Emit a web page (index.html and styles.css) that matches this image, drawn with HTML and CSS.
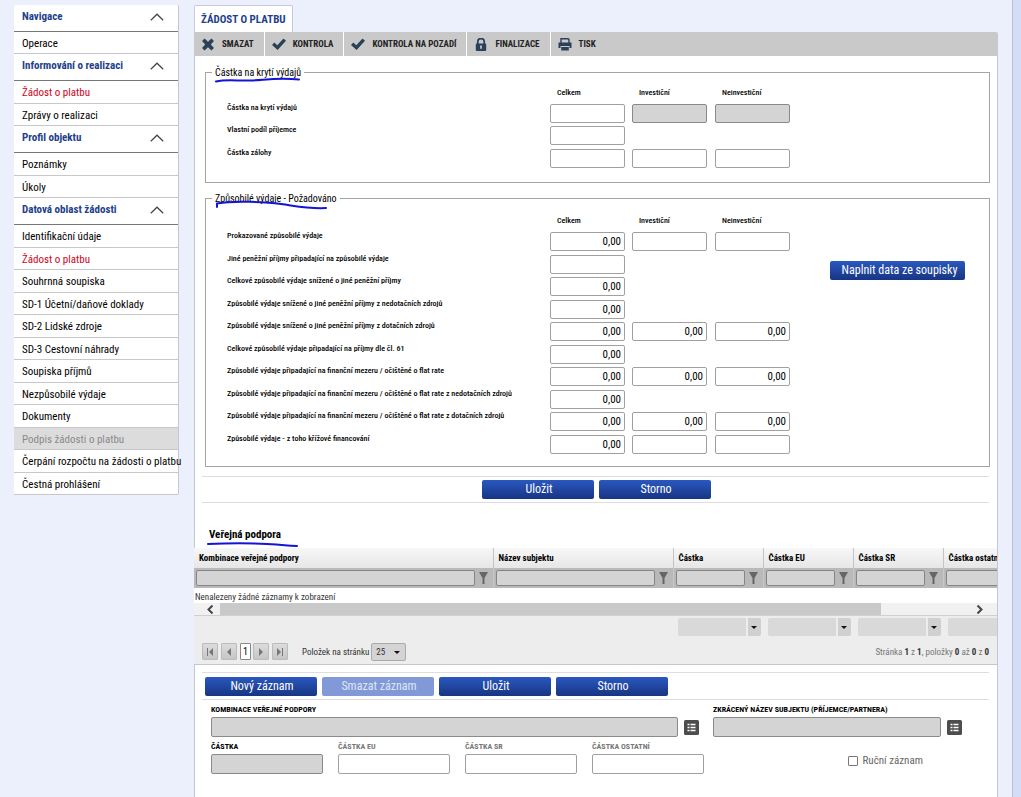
FILE: index.html
```html
<!DOCTYPE html>
<html lang="cs">
<head>
<meta charset="utf-8">
<meta name="viewport" content="width=device-width, initial-scale=1">
<title>Žádost o platbu</title>
<link rel="stylesheet" href="styles.css">
</head>
<body>
<svg class="sprite" aria-hidden="true">
  <symbol id="chevron" viewBox="0 0 14 8"><path d="M.8 7.2 7 1.2l6.200 6" fill="none" stroke="#444" stroke-width="1.200"/></symbol>
  <symbol id="check" viewBox="0 0 14 12"><path d="M0 6.500 2.300 4l3 2.700L11.500 0 14 2.300 5.600 11.500z" fill="#2b4158"/></symbol>
  <symbol id="funnel" viewBox="0 0 9 12"><path d="M0 0h9L5.500 6V12h-2V6z" fill="#666"/></symbol>
  <symbol id="list" viewBox="0 0 15 15"><rect width="15" height="15" rx="1.500" fill="#4d4d4d"/><path d="M3.500 4.500h2M3.500 7.500h2M3.500 10.500h2M6.500 4.500h5M6.500 7.500h5M6.500 10.500h5" stroke="#fff" stroke-width="1.500"/></symbol>
</svg>
<div class="page">
  <nav class="sidebar" aria-label="Navigace">
    <button class="group">Navigace<svg><use href="#chevron"/></svg></button>
    <ul class="single"><li><a href="#">Operace</a></li></ul>
    <button class="group">Informování o realizaci<svg><use href="#chevron"/></svg></button>
    <ul><li><a class="current" href="#">Žádost o platbu</a></li><li><a href="#">Zprávy o realizaci</a></li></ul>
    <button class="group">Profil objektu<svg><use href="#chevron"/></svg></button>
    <ul><li><a href="#">Poznámky</a></li><li><a href="#">Úkoly</a></li></ul>
    <button class="group">Datová oblast žádosti<svg><use href="#chevron"/></svg></button>
    <ul>
      <li><a href="#">Identifikační údaje</a></li>
      <li><a class="current" href="#">Žádost o platbu</a></li>
      <li><a href="#">Souhrnná soupiska</a></li>
      <li><a href="#">SD-1 Účetní/daňové doklady</a></li>
      <li><a href="#">SD-2 Lidské zdroje</a></li>
      <li><a href="#">SD-3 Cestovní náhrady</a></li>
      <li><a href="#">Soupiska příjmů</a></li>
      <li><a href="#">Nezpůsobilé výdaje</a></li>
      <li><a href="#">Dokumenty</a></li>
      <li><a class="disabled" href="#">Podpis žádosti o platbu</a></li>
      <li><a href="#">Čerpání rozpočtu na žádosti o platbu</a></li>
      <li><a href="#">Čestná prohlášení</a></li>
    </ul>
  </nav>

  <main class="main">
    <h1 class="tab">ŽÁDOST O PLATBU</h1>
    <div class="toolbar">
      <button><svg viewBox="0 0 12 12"><path d="M2.800.500 6 3.500 9.200.500 11.500 2.800 8.600 6l2.900 3.200-2.300 2.300L6 8.500l-3.200 3L.5 9.200 3.400 6 .5 2.800z" fill="#2b4158"/></svg>SMAZAT</button>
      <button><svg viewBox="0 0 14 12"><use href="#check"/></svg>KONTROLA</button>
      <button><svg viewBox="0 0 14 12"><use href="#check"/></svg>KONTROLA NA POZADÍ</button>
      <button><svg viewBox="0 0 12 12"><path d="M3 6V3.500a3 3 0 0 1 6 0V6" fill="none" stroke="#2b4158" stroke-width="1.600"/><rect x="1.200" y="5" width="9.600" height="7" rx="1" fill="#2b4158"/><path d="M6 7v3" stroke="#c9c9c9" stroke-width="1.600"/></svg>FINALIZACE</button>
      <button><svg viewBox="0 0 14 13"><path d="M3 5V.7h7.200L11 1.500V5" fill="#c9c9c9" stroke="#2b4158" stroke-width="1.400"/><path d="M.5 4.500h13V10h-2V8h-9v2h-2z" fill="#2b4158"/><rect x="3.200" y="9" width="7.600" height="3.500" fill="#2b4158"/></svg>TISK</button>
    </div>

    <div class="panel">
      <fieldset class="box cover">
        <legend>Částka na krytí výdajů<svg class="stroke" viewBox="0 0 86 6"><path d="M1 4.500C12 2 22 4 36 3.500S62 .5 84 2.500"/></svg></legend>
        <div class="amounts">
          <div class="row head"><span></span><span>Celkem</span><span>Investiční</span><span>Neinvestiční</span></div>
          <div class="row"><label for="a1">Částka na krytí výdajů</label><input id="a1"><input aria-label="Investiční" disabled><input aria-label="Neinvestiční" disabled></div>
          <div class="row"><label for="a2">Vlastní podíl příjemce</label><input id="a2"></div>
          <div class="row"><label for="a3">Částka zálohy</label><input id="a3"><input aria-label="Investiční"><input aria-label="Neinvestiční"></div>
        </div>
      </fieldset>

      <fieldset class="box eligible">
        <legend>Způsobilé výdaje - Požadováno<svg class="stroke long" viewBox="0 0 114 9"><path d="M2 6V2.500C18-.5 50 .8 66 3s28 5 45 4"/></svg></legend>
        <div class="amounts">
          <div class="row head"><span></span><span>Celkem</span><span>Investiční</span><span>Neinvestiční</span></div>
          <div class="row"><label for="b1">Prokazované způsobilé výdaje</label><input id="b1" value="0,00"><input aria-label="Investiční"><input aria-label="Neinvestiční"></div>
          <div class="row"><label for="b2">Jiné peněžní příjmy připadající na způsobilé výdaje</label><input id="b2"></div>
          <div class="row"><label for="b3">Celkové způsobilé výdaje snížené o jiné peněžní příjmy</label><input id="b3" value="0,00"></div>
          <div class="row"><label for="b4">Způsobilé výdaje snížené o jiné peněžní příjmy z nedotačních zdrojů</label><input id="b4" value="0,00"></div>
          <div class="row"><label for="b5">Způsobilé výdaje snížené o jiné peněžní příjmy z dotačních zdrojů</label><input id="b5" value="0,00"><input aria-label="Investiční" value="0,00"><input aria-label="Neinvestiční" value="0,00"></div>
          <div class="row"><label for="b6">Celkové způsobilé výdaje připadající na příjmy dle čl. 61</label><input id="b6" value="0,00"></div>
          <div class="row"><label for="b7">Způsobilé výdaje připadající na finanční mezeru / očištěné o flat rate</label><input id="b7" value="0,00"><input aria-label="Investiční" value="0,00"><input aria-label="Neinvestiční" value="0,00"></div>
          <div class="row"><label for="b8">Způsobilé výdaje připadající na finanční mezeru / očištěné o flat rate z nedotačních zdrojů</label><input id="b8" value="0,00"></div>
          <div class="row"><label for="b9">Způsobilé výdaje připadající na finanční mezeru / očištěné o flat rate z dotačních zdrojů</label><input id="b9" value="0,00"><input aria-label="Investiční" value="0,00"><input aria-label="Neinvestiční" value="0,00"></div>
          <div class="row"><label for="b10">Způsobilé výdaje - z toho křížové financování</label><input id="b10" value="0,00"><input aria-label="Investiční"><input aria-label="Neinvestiční"></div>
        </div>
        <button class="btn fill">Naplnit data ze soupisky</button>
      </fieldset>

      <div class="actions centered"><button class="btn">Uložit</button><button class="btn">Storno</button></div>

      <h2 class="section">Veřejná podpora<svg class="stroke wide" viewBox="0 0 92 6"><path d="M1 3C25 2 40 2 60 3s18 2 30 2"/></svg></h2>

      <div class="grid">
        <table>
          <colgroup><col class="c-name"><col class="c-subject"><col class="c-num"><col class="c-num"><col class="c-num"><col class="c-num"></colgroup>
          <thead>
            <tr class="heads"><th>Kombinace veřejné podpory</th><th>Název subjektu</th><th>Částka</th><th>Částka EU</th><th>Částka SR</th><th>Částka ostatní</th></tr>
            <tr class="filters">
              <td><div><input aria-label="Filtr kombinace"><svg><use href="#funnel"/></svg></div></td>
              <td><div><input aria-label="Filtr název"><svg><use href="#funnel"/></svg></div></td>
              <td><div><input aria-label="Filtr částka"><svg><use href="#funnel"/></svg></div></td>
              <td><div><input aria-label="Filtr částka EU"><svg><use href="#funnel"/></svg></div></td>
              <td><div><input aria-label="Filtr částka SR"><svg><use href="#funnel"/></svg></div></td>
              <td><div><input aria-label="Filtr částka ostatní"><svg><use href="#funnel"/></svg></div></td>
            </tr>
          </thead>
        </table>
        <p class="empty">Nenalezeny žádné záznamy k zobrazení</p>
        <div class="scroll">
          <button aria-label="Vlevo"><svg viewBox="0 0 8 9"><path d="M6.500.5 2.500 4.500l4 4" /></svg></button>
          <div class="track"><div class="thumb"></div></div>
          <button aria-label="Vpravo"><svg viewBox="0 0 8 9"><path d="M1.500.5l4 4-4 4" /></svg></button>
        </div>
        <div class="sums">
          <span class="combo"><select aria-label="Souhrn částka"></select></span>
          <span class="combo"><select aria-label="Souhrn částka EU"></select></span>
          <span class="combo"><select aria-label="Souhrn částka SR"></select></span>
          <span class="combo"><select aria-label="Souhrn částka ostatní"></select></span>
        </div>
        <div class="pager">
          <button aria-label="První"><svg viewBox="0 0 8 8"><path d="M1 0h1v8H1zM7 0v8L3 4z"/></svg></button>
          <button aria-label="Předchozí"><svg viewBox="0 0 8 8"><path d="M6 0v8L2 4z"/></svg></button>
          <button class="num">1</button>
          <button aria-label="Další"><svg viewBox="0 0 8 8"><path d="M2 0v8l4-4z"/></svg></button>
          <button class="last" aria-label="Poslední"><svg viewBox="0 0 8 8"><path d="M1 0v8l4-4zM6 0h1v8H6z"/></svg></button>
          <label for="size">Položek na stránku</label>
          <span class="combo size"><select id="size"><option>25</option></select></span>
          <span class="info">Stránka <b>1</b> z <b>1</b>, položky <b>0</b> až <b>0</b> z <b>0</b></span>
        </div>
      </div>

      <div class="actions"><button class="btn">Nový záznam</button><button class="btn" disabled>Smazat záznam</button><button class="btn">Uložit</button><button class="btn">Storno</button></div>

      <div class="detail">
        <div class="field combination"><label for="d1">KOMBINACE VEŘEJNÉ PODPORY</label><div class="lookup"><input id="d1" disabled><button aria-label="Vybrat kombinaci"><svg><use href="#list"/></svg></button></div></div>
        <div class="field subject"><label for="d2">ZKRÁCENÝ NÁZEV SUBJEKTU (PŘÍJEMCE/PARTNERA)</label><div class="lookup"><input id="d2" disabled><button aria-label="Vybrat subjekt"><svg><use href="#list"/></svg></button></div></div>
      </div>
      <div class="detail sums-detail">
        <div class="field"><label for="e1">ČÁSTKA</label><input id="e1" disabled></div>
        <div class="field optional"><label for="e2">ČÁSTKA EU</label><input id="e2"></div>
        <div class="field optional"><label for="e3">ČÁSTKA SR</label><input id="e3"></div>
        <div class="field optional"><label for="e4">ČÁSTKA OSTATNÍ</label><input id="e4"></div>
        <label class="manual"><input type="checkbox">Ruční záznam</label>
      </div>
    </div>
  </main>
</div>
</body>
</html>
```
FILE: styles.css
```css
* { box-sizing: border-box; }
body {
  margin: 0;
  background: #ecf0fd;
  font-family: "Roboto Condensed", Roboto, sans-serif;
  font-size: 11px;
  color: #000;
}
button, input, select { font: inherit; color: inherit; margin: 0; }
button { border: 0; padding: 0; background: none; }
.sprite { display: none; }

.page {
  display: flex;
  align-items: flex-start;
  gap: 15px;
  min-height: 100vh;
  padding: 5px 15px 0 14px;
  border-right: 8px solid #d5dcf6;
  box-shadow: inset -1px 0 #bcc0d6;
}

/* Sidebar */
.sidebar {
  flex: 0 0 165px;
  min-width: 0;
  background: #fff;
  border-right: 1px solid #c4c6d2;
  border-radius: 2px;
}
.group {
  display: flex;
  align-items: center;
  justify-content: space-between;
  width: 100%;
  height: 27px;
  padding: 0 14px 3px 8px;
  border-bottom: 1px solid #777;
  font-weight: 700;
  color: #1d3f8c;
}
.group svg { width: 14px; height: 8px; }
.sidebar ul { list-style: none; margin: 0; padding: 0; }
.sidebar li { height: 22px; border-bottom: 1px solid #c8c8c8; }
.sidebar li:nth-child(odd) { height: 23px; }
.sidebar .single li { height: 22px; }
.sidebar a {
  display: block;
  height: 100%;
  padding-left: 8px;
  line-height: 23px;
  white-space: nowrap;
  color: #000;
  text-decoration: none;
}
.sidebar a.current { color: #d0021b; }
.sidebar a.disabled { background: #dcdcdc; color: #8a8a8a; }

/* Tab and toolbar */
.main { flex: 1; min-width: 0; display: flex; flex-direction: column; min-height: calc(100vh - 5px); }
.tab {
  align-self: flex-start;
  margin: 0;
  height: 27px;
  padding: 0 6px;
  border: 1px solid #c6c9da;
  border-bottom: 0;
  border-radius: 2px 2px 0 0;
  background: #fff;
  font-size: 11px;
  line-height: 27px;
  color: #1d3f8c;
}
.toolbar { display: flex; height: 24px; background: #c9c9c9; border-radius: 0 2px 0 0; }
.toolbar button {
  display: flex;
  align-items: center;
  gap: 7px;
  padding: 0 10px 0 7px;
  border-right: 1px solid #fff;
  font-size: 9px;
  font-weight: 700;
  color: #222;
}
.toolbar button:last-child { border: 0; }
.toolbar svg { width: 14px; height: 13px; }

.panel { flex: 1; background: #fff; border: 1px solid #c4c6d2; border-width: 0 1px; padding-top: 9px; }

/* Amount boxes */
.box {
  display: flex;
  align-items: flex-start;
  min-width: 0;
  margin: 0 7px 0 10px;
  padding: 0 24px 0 21px;
  border: 1px solid #a5a5a5;
}
.cover { height: 118px; }
.eligible { height: 276px; margin-top: 8px; padding-top: 1px; }
.box legend { position: relative; margin-left: -15px; padding: 2px 3px 0; font-size: 10px; line-height: 12px; }
.stroke { position: absolute; left: 3px; top: 12px; width: 86px; height: 6px; fill: none; stroke: #1414d8; stroke-width: 2; stroke-linecap: round; overflow: visible; }
.stroke.long { top: 10px; width: 114px; height: 9px; }
.stroke.wide { left: 10px; top: 15px; width: 92px; height: 6px; }
.amounts { flex: none; }
.row { display: grid; grid-template-columns: 323px 82px 83px 75px; height: 23px; font-size: 8px; font-weight: 500; }
.row:nth-child(even) { height: 22px; }
.row.head { height: 25px; line-height: 28px; }
.eligible .row:nth-child(even) { height: 23px; }
.eligible .row:nth-child(odd) { height: 22px; }
.eligible .row.head { height: 26px; line-height: 30px; }
.row.head span { padding-left: 7px; }
.row label { line-height: 8px; }
.row input { width: 75px; font-size: 11px; font-weight: 400; text-align: right; }
input {
  min-width: 0;
  height: 20px;
  padding: 0 3px;
  border: 1px solid #a0a0a0;
  border-radius: 2px;
  background: #fff;
}
.row input { height: 19px; }
input:disabled { background: #d4d4d4; border-color: #8a8a8a; }

.btn {
  width: 112px;
  height: 19px;
  padding-left: 2px;
  border-radius: 2px;
  background: linear-gradient(#2a58c0, #173583);
  font-size: 12px;
  line-height: 19px;
  color: #fff;
}
.btn:disabled { background: #8299d8; color: #dfe5f7; }
.fill { width: 135px; margin: 55px 0 0 auto; padding-left: 4px; }
.actions {
  display: flex;
  gap: 5px;
  height: 28px;
  margin: 7px 8px 0 7px;
  padding: 4px 3px;
  border-top: 1px solid #dedede;
  border-bottom: 1px solid #dedede;
}
.centered { justify-content: center; height: 27px; margin-top: 9px; padding: 3px 0 0 2px; }

/* Data grid */
.section { position: relative; margin: 0; padding: 23px 0 5px 14px; font-size: 11px; line-height: 17px; }
.section .stroke { left: 12px; top: 38px; }
.grid { overflow: hidden; margin-left: -1px; background: #ededed; border-bottom: 1px solid #c4c6d2; }
.grid table { table-layout: fixed; width: 839px; min-width: 100%; border-collapse: collapse; }
.c-name { width: 299px; }
.c-subject { width: 180px; }
.c-num { width: 90px; }
.heads th {
  height: 20px;
  padding: 0 5px;
  border-right: 1px solid #c4c4c4;
  background: linear-gradient(#f7f7f7, #e6e6e6);
  font-size: 9px;
  text-align: left;
  white-space: nowrap;
}
.filters td { height: 20px; padding: 0 5px 0 2px; background: #b9b9b9; border-right: 1px solid #c8c8c8; }
.filters div { display: flex; align-items: center; gap: 4px; }
.filters input { flex: 1; height: 16px; border-color: #858585; background: #d4d4d4; }
.filters svg { flex: none; width: 9px; height: 12px; }
.empty { margin: 0; padding-left: 1px; height: 15px; background: #fff; font-size: 9px; line-height: 18px; color: #333; }
.scroll { display: flex; height: 13px; background: #f1f1f1; border-bottom: 1px solid #d0d0d0; }
.scroll button { display: flex; align-items: center; justify-content: center; flex: 0 0 26px; padding-left: 6px; }
.scroll button:last-child { flex-basis: 34px; padding: 0; }
.scroll svg { width: 8px; height: 9px; fill: none; stroke: #444; stroke-width: 2; }
.track { flex: 1; }
.thumb { width: 89%; height: 12px; background: #c9c9c9; }
.sums { display: flex; gap: 7px; width: max-content; padding: 2px 0 0 484px; }
.combo { position: relative; display: block; }
.combo select { display: block; appearance: none; width: 83px; height: 18px; border: 0; border-radius: 2px; background: linear-gradient(to right, #d9d9d9 68px, #ededed 68px 70px, #d0d0d0 70px); }
.combo::after { content: ""; position: absolute; right: 4px; top: 8px; border: 3px solid transparent; border-top-color: #111; border-bottom: 0; pointer-events: none; }
.pager { display: flex; align-items: center; height: 28px; padding: 3px 8px 0 8px; font-size: 9px; color: #333; }
.pager button { display: flex; align-items: center; justify-content: center; width: 16px; height: 17px; margin-right: 3px; border: 1px solid #bbb; border-radius: 1px; background: linear-gradient(#dcdcdc, #c6c6c6); }
.pager svg { width: 8px; height: 8px; fill: #777; }
.pager .num { width: 11px; margin-right: 2px; border-color: #888; background: #fff; font-size: 10px; color: #000; }
.pager .last { margin-right: 14px; }
.combo.size { margin-left: 2px; }
.combo.size select { width: 35px; height: 18px; padding-left: 4px; border: 1px solid #aaa; background: #d4d4d4; }
.combo.size::after { right: 6px; }
.info { margin-left: auto; color: #777; }
.info b { color: #333; }

/* Detail form */
.detail { display: flex; align-items: flex-start; padding: 4px 35px 0 16px; }
.field { display: flex; flex-direction: column; font-size: 8px; font-weight: 700; }
.field label { line-height: 11px; margin-bottom: 2px; }
.combination { flex: 488 1 0; margin-right: 14px; }
.subject { flex: 249 1 0; }
.lookup { display: flex; align-items: center; gap: 6px; }
.lookup input { flex: 1; }
.lookup button { display: flex; }
.lookup svg { width: 15px; height: 15px; }
.field input { height: 20px; }
.sums-detail { gap: 15px; padding: 4px 74px 0 16px; }
.sums-detail .field { flex: 0 1 112px; }
.sums-detail input { width: 100%; }
.optional { color: #777; }
.manual { display: flex; align-items: center; gap: 5px; margin: 12px 0 0 auto; font-size: 11px; line-height: 16px; color: #666; }
.sums-detail .manual input { appearance: none; width: 10px; height: 10px; padding: 0; border: 1px solid #777; border-radius: 1px; }
```
